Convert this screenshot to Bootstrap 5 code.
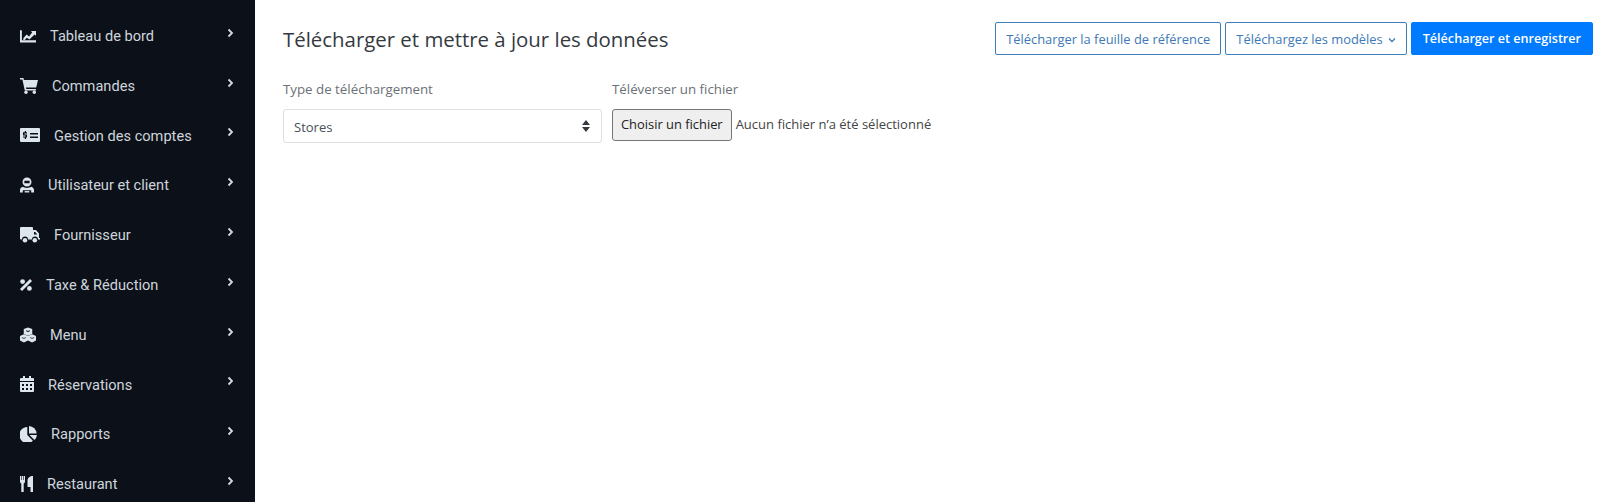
<!DOCTYPE html>
<html lang="fr">
<head>
    <title>Télécharger et mettre à jour les données</title>
    <meta charset="UTF-8">
    <link href="https://cdn.jsdelivr.net/npm/bootstrap@5.3.0/dist/css/bootstrap.min.css" rel="stylesheet">
    <style>
        html, body { height: 502px; overflow: hidden; }
        body { font-family: "Open Sans", "Noto Sans", sans-serif; color: #343a40; background: #fff; }
        .side-panel { width: 255px; height: 502px; flex: 0 0 255px; background: #0c1018; padding-top: 12px; overflow: hidden; }
        .side-row { flex: 0 0 49.8px; padding: 0 20px; color: #ced5dc; font-family: Roboto, sans-serif; font-size: 14.6px; text-decoration: none; }
        .side-row:hover { color: #fff; }
        .side-ico { fill: #dde5ed; margin-right: 14px; margin-top: -2px; flex: none; }
        .side-arrow { margin-top: -8px; flex: none; margin-right: 1px; }
        .main-area { padding: 22px 7px 0 28px; }
        .page-title { font-size: 20.4px; font-weight: 500; margin: 1px 0 0; color: #343a40; }
        .head-btn { font-size: 12.9px; height: 33px; padding: 2px 10px 0; border-radius: 2px; display: flex; align-items: center; gap: 5px; white-space: nowrap; }
        .head-btn.btn-outline-primary { color: #4079b6; border-color: #3f7fba; }
        .head-btn.btn-primary { background: #007bff; border-color: #007bff; font-weight: 600; font-size: 12.6px; padding: 2px 11px 0; }
        .field-label { font-size: 13.3px; font-weight: 500; color: #6b7177; margin-bottom: 11px; line-height: 18px; }
        .form-gap { margin-top: 25px; gap: 10px; }
        .kind-select { width: 319px; height: 34px; font-size: 13px; color: #495057; border-color: #dcdfe3; border-radius: 3px; padding: 3px 28px 0 10px;
            background-size: 10px 14px; background-position: right 10px center;
            background-image: url("data:image/svg+xml,%3csvg xmlns='http://www.w3.org/2000/svg' viewBox='0 0 10 14'%3e%3cpath fill='%23343a40' d='M5 1l4 5H1zM5 13L1 8h8z'/%3e%3c/svg%3e"); }
        .file-btn { height: 32px; padding: 0 8px; font-size: 12.9px; color: #222; background: #efefef; border: 1px solid #767676; border-radius: 3px; }
        .file-name { font-size: 13px; color: #444; margin-left: 4px; }
    </style>
</head>
<body>
<div class="d-flex">
    <!-- Menu latéral -->
    <nav class="side-panel d-flex flex-column">
        <a href="#" class="side-row d-flex align-items-center">
            <svg class="side-ico" width="16" height="14" viewBox="0 0 17 14"><path d="M0 1h2v10.500h15V14H0z"/><path d="M3.500 9.500l3.500-4 2.700 2L13 3l-1.500-1.200H17v5l-1.500-1.500-5.500 5.500-2.700-2-2.300 2.500H3.500z"/></svg>
            <span>Tableau de bord</span>
            <svg class="side-arrow ms-auto" width="7" height="10" viewBox="0 0 7 10"><path d="M1.500 1.500L5 5 1.500 8.500" fill="none" stroke="#d3dae2" stroke-width="1.800"/></svg>
        </a>
        <a href="#" class="side-row d-flex align-items-center">
            <svg class="side-ico" width="18" height="16" viewBox="0 0 18 16"><path d="M0 0h3.400l.5 2H18l-1.800 7.500H6l.3 1.500h9.600v1.500H4.800L2.400 1.500H0z"/><circle cx="6" cy="14.300" r="1.700"/><circle cx="14.300" cy="14.300" r="1.700"/></svg>
            <span>Commandes</span>
            <svg class="side-arrow ms-auto" width="7" height="10" viewBox="0 0 7 10"><path d="M1.500 1.500L5 5 1.500 8.500" fill="none" stroke="#d3dae2" stroke-width="1.800"/></svg>
        </a>
        <a href="#" class="side-row d-flex align-items-center">
            <svg class="side-ico" width="20" height="14" viewBox="0 0 20 14"><path fill-rule="evenodd" d="M1 0h18a1 1 0 0 1 1 1v12a1 1 0 0 1-1 1H1a1 1 0 0 1-1-1V1a1 1 0 0 1 1-1zM10 5v1.500h8V5zM10 8.500V10h8V8.500zM4.800 3v1.200H3v3.200h2.500v1H3v1.200h1.800V11h1.200V9.600h1V6.400H4.500v-1H7V4.200H6V3z"/></svg>
            <span>Gestion des comptes</span>
            <svg class="side-arrow ms-auto" width="7" height="10" viewBox="0 0 7 10"><path d="M1.500 1.500L5 5 1.500 8.500" fill="none" stroke="#d3dae2" stroke-width="1.800"/></svg>
        </a>
        <a href="#" class="side-row d-flex align-items-center">
            <svg class="side-ico" width="14" height="16" viewBox="0 0 15 16"><path fill-rule="evenodd" d="M7.500 0a4.800 4.800 0 0 1 4.800 4.800A4.800 4.800 0 0 1 7.500 9.600 4.800 4.800 0 0 1 2.700 4.800 4.800 4.800 0 0 1 7.500 0zM4.700 3.500v2.600h5.600V3.500z"/><path d="M3 10c1 .8 2.800 1.200 4.500 1.200S11 10.800 12 10c1.800.4 3 1.800 3 3.500V16h-3v-2.500H3V16H0v-2.500C0 11.800 1.200 10.400 3 10z"/><path d="M5 14.500h5V16H5z"/></svg>
            <span>Utilisateur et client</span>
            <svg class="side-arrow ms-auto" width="7" height="10" viewBox="0 0 7 10"><path d="M1.500 1.500L5 5 1.500 8.500" fill="none" stroke="#d3dae2" stroke-width="1.800"/></svg>
        </a>
        <a href="#" class="side-row d-flex align-items-center">
            <svg class="side-ico" width="20" height="16" viewBox="0 0 20 16"><path fill-rule="evenodd" d="M1 0h11a1 1 0 0 1 1 1v2h3l3 3.500V11h1v1.500h-2a3 3 0 0 0-6 0H8a3 3 0 0 0-6 0H1a1 1 0 0 1-1-1V1a1 1 0 0 1 1-1zM14 5v2.500h3.200L15.200 5z"/><circle cx="5" cy="13.200" r="2.300"/><circle cx="14.800" cy="13.200" r="2.300"/></svg>
            <span>Fournisseur</span>
            <svg class="side-arrow ms-auto" width="7" height="10" viewBox="0 0 7 10"><path d="M1.500 1.500L5 5 1.500 8.500" fill="none" stroke="#d3dae2" stroke-width="1.800"/></svg>
        </a>
        <a href="#" class="side-row d-flex align-items-center">
            <svg class="side-ico" width="12" height="12" viewBox="0 0 12 12"><circle cx="2.600" cy="2.600" r="2.400"/><circle cx="9.400" cy="9.400" r="2.400"/><path d="M10 0l2 2-10 10-2-2z"/></svg>
            <span>Taxe &amp; Réduction</span>
            <svg class="side-arrow ms-auto" width="7" height="10" viewBox="0 0 7 10"><path d="M1.500 1.500L5 5 1.500 8.500" fill="none" stroke="#d3dae2" stroke-width="1.800"/></svg>
        </a>
        <a href="#" class="side-row d-flex align-items-center">
            <svg class="side-ico" width="16" height="16" viewBox="0 0 17 16"><path fill-rule="evenodd" d="M8.500 0l4.500 1.700v5.300l-4.500 1.700L4 7V1.700zM6.500 3v1l2 .7 2-.7V3l-2 .7z"/><path fill-rule="evenodd" d="M4.200 7.200L8.500 9v4.800L4.200 16 0 13.800V9zM2 10.300v1l2.200.8 2-.8v-1l-2 .8z"/><path fill-rule="evenodd" d="M12.800 7.200L17 9v4.800L12.800 16l-4.300-2.200V9zM10.800 10.300v1l2 .8 2.200-.8v-1l-2.200.8z"/></svg>
            <span>Menu</span>
            <svg class="side-arrow ms-auto" width="7" height="10" viewBox="0 0 7 10"><path d="M1.500 1.500L5 5 1.500 8.500" fill="none" stroke="#d3dae2" stroke-width="1.800"/></svg>
        </a>
        <a href="#" class="side-row d-flex align-items-center">
            <svg class="side-ico" width="14" height="16" viewBox="0 0 14 16"><path d="M3 0h2v2h4V0h2v2h2a1 1 0 0 1 1 1v2H0V3a1 1 0 0 1 1-1h2z"/><path fill-rule="evenodd" d="M0 6h14v9a1 1 0 0 1-1 1H1a1 1 0 0 1-1-1zM2 8v2h2V8zM6 8v2h2V8zM10 8v2h2V8zM2 12v2h2v-2zM6 12v2h2v-2zM10 12v2h2v-2z"/></svg>
            <span>Réservations</span>
            <svg class="side-arrow ms-auto" width="7" height="10" viewBox="0 0 7 10"><path d="M1.500 1.500L5 5 1.500 8.500" fill="none" stroke="#d3dae2" stroke-width="1.800"/></svg>
        </a>
        <a href="#" class="side-row d-flex align-items-center">
            <svg class="side-ico" width="17" height="16" viewBox="0 0 17 16"><path d="M7.300 1v8l5.600 5.700A8 8 0 1 1 7.300 1z"/><path d="M9 0a8 8 0 0 1 7.600 7.500H9z"/><path d="M9.500 9H17a8 8 0 0 1-2.600 4.900z"/></svg>
            <span>Rapports</span>
            <svg class="side-arrow ms-auto" width="7" height="10" viewBox="0 0 7 10"><path d="M1.500 1.500L5 5 1.500 8.500" fill="none" stroke="#d3dae2" stroke-width="1.800"/></svg>
        </a>
        <a href="#" class="side-row d-flex align-items-center">
            <svg class="side-ico" width="13" height="16" viewBox="0 0 13 16"><path d="M0 0h1.200v4h.6V0h1.400v4h.6V0H5v5.500c0 1-.6 1.700-1.300 2V16H1.300V7.500C.6 7.200 0 6.500 0 5.500z"/><path d="M13 0v16h-2.500v-5H7.500V4.500C7.500 2 10 0 13 0z"/></svg>
            <span>Restaurant</span>
            <svg class="side-arrow ms-auto" width="7" height="10" viewBox="0 0 7 10"><path d="M1.500 1.500L5 5 1.500 8.500" fill="none" stroke="#d3dae2" stroke-width="1.800"/></svg>
        </a>
    </nav>

    <!-- Contenu -->
    <main class="main-area flex-grow-1">
        <div class="d-flex justify-content-between align-items-center">
            <h1 class="page-title">Télécharger et mettre à jour les données</h1>
            <div class="d-flex gap-1">
                <button type="button" class="btn btn-outline-primary head-btn">Télécharger la feuille de référence</button>
                <button type="button" class="btn btn-outline-primary head-btn">Téléchargez les modèles
                    <svg width="8" height="6" viewBox="0 0 8 6"><path d="M1 1.500l3 3 3-3" fill="none" stroke="#4079b6" stroke-width="1.300"/></svg>
                </button>
                <button type="button" class="btn btn-primary head-btn">Télécharger et enregistrer</button>
            </div>
        </div>
        <form class="d-flex form-gap">
            <div>
                <label class="field-label d-block">Type de téléchargement</label>
                <select class="form-select kind-select">
                    <option>Stores</option>
                </select>
            </div>
            <div>
                <label class="field-label d-block">Téléverser un fichier</label>
                <div class="d-flex align-items-center">
                    <button type="button" class="file-btn">Choisir un fichier</button>
                    <span class="file-name">Aucun fichier n’a été sélectionné</span>
                </div>
            </div>
        </form>
    </main>
</div>
<script src="https://cdn.jsdelivr.net/npm/bootstrap@5.3.0/dist/js/bootstrap.bundle.min.js"></script>
</body>
</html>
